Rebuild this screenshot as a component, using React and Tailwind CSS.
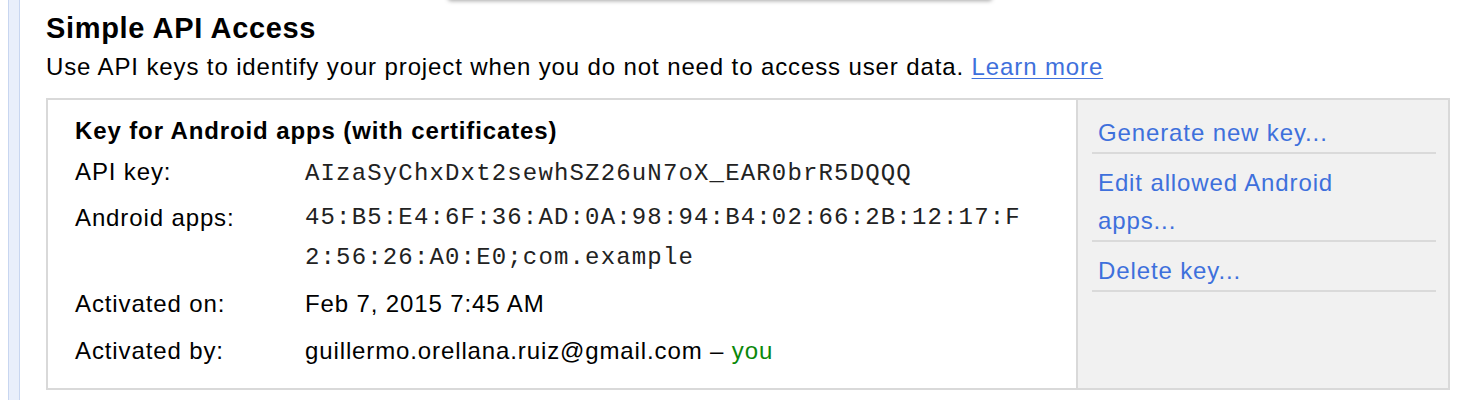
import React from "react";

const sans = { fontFamily: '"Liberation Sans", Arial, sans-serif' };
const mono = { fontFamily: '"Liberation Mono", "Courier New", monospace' };

function Row({ label, children, className = "" }) {
  return (
    <div className={`flex items-start leading-[40px] ${className}`}>
      <div className="w-[230px] shrink-0">{label}</div>
      <div className="min-w-0 flex-1">{children}</div>
    </div>
  );
}

function ActionLink({ children }) {
  return (
    <div className="border-b-2 border-[#dadada] pl-[6px] pr-[40px] pt-[10px]">
      <a href="#" className="block leading-[38px] text-[#3e70dc] no-underline">
        {children}
      </a>
    </div>
  );
}

export default function App() {
  return (
    <div
      className="relative flex h-[400px] w-[1476px] overflow-hidden bg-white text-black"
      style={sans}
    >
      {/* overlay edge with shadow at the top */}
      <div className="absolute left-[448px] top-[-10px] h-[10px] w-[544px] rounded-b-[3px] bg-white shadow-[0_1px_4px_rgba(0,0,0,0.35)]" />

      <div className="ml-[8px] h-full w-[12px] shrink-0 border-x border-[#c8d6f0] bg-[#e9effb]" />

      <div className="ml-[26px] flex flex-col pt-[11px]">
        <h1 className="text-[29px] font-bold leading-[34px] tracking-[0.65px]">Simple API Access</h1>
        <p className="mt-[5px] text-[24px] leading-[34px] tracking-[0.88px]">
          Use API keys to identify your project when you do not need to access user data.{" "}
          <a href="#" className="text-[#3e70dc] underline decoration-1 underline-offset-[3px]">Learn more</a>
        </p>

        <div className="mt-[14px] flex w-[1404px] border-2 border-[#d9d9d9] text-[24px] tracking-[0.88px]">
          <div className="w-[1028px] shrink-0 pb-[17px] pl-[27px] pr-[48px] pt-[11px]">
            <div className="font-bold leading-[40px]">Key for Android apps (with certificates)</div>
            <Row label="API key:" className="mt-[1px]">
              <span className="text-[24px] tracking-[1.16px] text-[#222]" style={mono}>
                AIzaSyChxDxt2sewhSZ26uN7oX_EAR0brR5DQQQ
              </span>
            </Row>
            <Row label="Android apps:" className="mt-[4px]">
              <div className="w-[722px] break-all text-[24px] tracking-[1.16px] text-[#222]" style={mono}>
                45:B5:E4:6F:36:AD:0A:98:94:B4:02:66:2B:12:17:F2:56:26:A0:E0;com.example
              </div>
            </Row>
            <Row label="Activated on:" className="mt-[6px]">
              Feb 7, 2015 7:45 AM
            </Row>
            <Row label="Activated by:" className="mt-[7px]">
              guillermo.orellana.ruiz@gmail.com – <span className="text-[#0a880a]">you</span>
            </Row>
          </div>
          <div className="flex-1 border-l-2 border-[#d9d9d9] bg-[#f1f1f1] pl-[14px] pr-[12px] pt-[4px]">
            <ActionLink>Generate new key...</ActionLink>
            <ActionLink>Edit allowed Android apps...</ActionLink>
            <ActionLink>Delete key...</ActionLink>
          </div>
        </div>
      </div>
    </div>
  );
}
